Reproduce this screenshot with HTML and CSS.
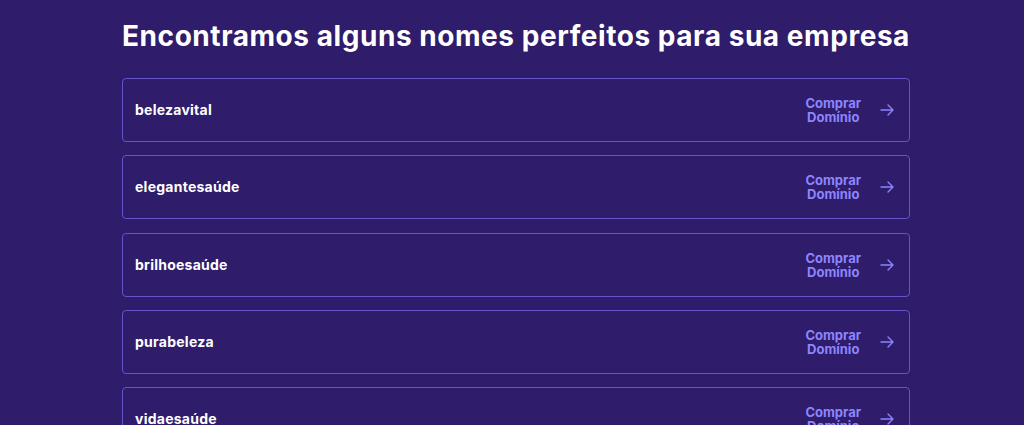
FILE: index.html
```html
<!DOCTYPE html>
<html lang="pt">
<head>
<meta charset="utf-8">
<link rel="stylesheet" href="styles.css">
</head>
<body>
<main class="wrap">
  <h1 class="title">Encontramos alguns nomes perfeitos para sua empresa</h1>
  <ul class="list">
    <li class="card"><span class="name">belezavital</span><a class="buy" href="#"><span class="buy-text">Comprar<br>Domínio</span><svg class="arrow" viewBox="0 0 14 12" width="14" height="12"><path d="M1 6h12M8 1l5 5-5 5" fill="none" stroke="currentColor" stroke-width="1.4" stroke-linecap="round" stroke-linejoin="round"/></svg></a></li>
    <li class="card"><span class="name">elegantesaúde</span><a class="buy" href="#"><span class="buy-text">Comprar<br>Domínio</span><svg class="arrow" viewBox="0 0 14 12" width="14" height="12"><path d="M1 6h12M8 1l5 5-5 5" fill="none" stroke="currentColor" stroke-width="1.4" stroke-linecap="round" stroke-linejoin="round"/></svg></a></li>
    <li class="card"><span class="name">brilhoesaúde</span><a class="buy" href="#"><span class="buy-text">Comprar<br>Domínio</span><svg class="arrow" viewBox="0 0 14 12" width="14" height="12"><path d="M1 6h12M8 1l5 5-5 5" fill="none" stroke="currentColor" stroke-width="1.4" stroke-linecap="round" stroke-linejoin="round"/></svg></a></li>
    <li class="card"><span class="name">purabeleza</span><a class="buy" href="#"><span class="buy-text">Comprar<br>Domínio</span><svg class="arrow" viewBox="0 0 14 12" width="14" height="12"><path d="M1 6h12M8 1l5 5-5 5" fill="none" stroke="currentColor" stroke-width="1.4" stroke-linecap="round" stroke-linejoin="round"/></svg></a></li>
    <li class="card"><span class="name">vidaesaúde</span><a class="buy" href="#"><span class="buy-text">Comprar<br>Domínio</span><svg class="arrow" viewBox="0 0 14 12" width="14" height="12"><path d="M1 6h12M8 1l5 5-5 5" fill="none" stroke="currentColor" stroke-width="1.4" stroke-linecap="round" stroke-linejoin="round"/></svg></a></li>
  </ul>
</main>
</body>
</html>
```
FILE: styles.css
```css
html, body {
  margin: 0;
  padding: 0;
  background: #2f1c6a;
  height: 425px;
  overflow: hidden;
}
body {
  font-family: Inter, "DejaVu Sans", sans-serif;
  color: #ffffff;
}
.wrap {
  width: 788px;
  margin-left: 122px;
  padding-top: 18px;
}
.title {
  margin: 0 0 24px;
  font-size: 28px;
  line-height: 36px;
  font-weight: 700;
  text-align: center;
  white-space: nowrap;
  letter-spacing: 0.55px;
}
.list {
  list-style: none;
  margin: 0;
  padding: 0;
  display: flex;
  flex-direction: column;
  gap: 13.25px;
}
.card {
  box-sizing: border-box;
  height: 64px;
  border: 1px solid #6553c9;
  border-radius: 4px;
  display: flex;
  align-items: center;
  justify-content: space-between;
  padding: 0 15px 0 12px;
}
.name {
  font-size: 14px;
  font-weight: 700;
  line-height: 20px;
  letter-spacing: 0.25px;
}
.buy {
  display: flex;
  align-items: center;
  gap: 19px;
  color: #8c85ff;
  text-decoration: none;
}
.buy-text {
  font-size: 13px;
  font-weight: 700;
  line-height: 14px;
  text-align: center;
}
.arrow {
  display: block;
}
```
